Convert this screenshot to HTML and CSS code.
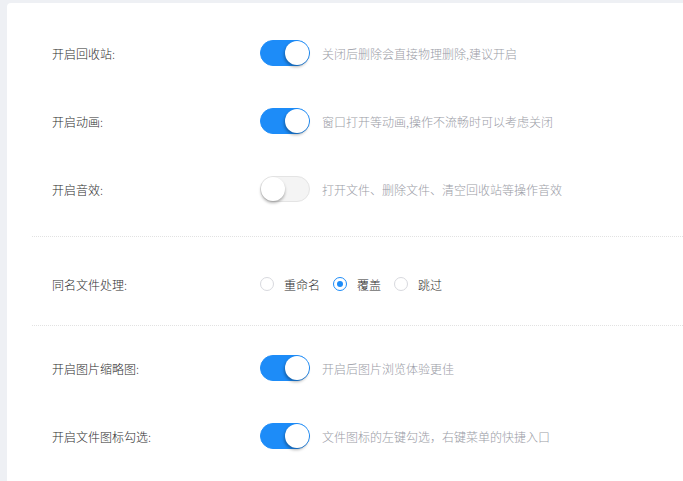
FILE: index.html
```html
<!DOCTYPE html>
<html lang="zh-CN">
<head>
  <meta charset="UTF-8">
  <title>设置</title>
  <link rel="stylesheet" href="styles.css">
</head>
<body>
  <div class="setting-panel">
    <div class="setting-group group-first">
      <div class="setting-row">
        <div class="setting-label">开启回收站:</div>
        <span class="switch on"><span class="switch-knob"></span></span>
        <span class="setting-desc">关闭后删除会直接物理删除,建议开启</span>
      </div>
      <div class="setting-row">
        <div class="setting-label">开启动画:</div>
        <span class="switch on"><span class="switch-knob"></span></span>
        <span class="setting-desc">窗口打开等动画,操作不流畅时可以考虑关闭</span>
      </div>
      <div class="setting-row">
        <div class="setting-label">开启音效:</div>
        <span class="switch"><span class="switch-knob"></span></span>
        <span class="setting-desc">打开文件、删除文件、清空回收站等操作音效</span>
      </div>
    </div>

    <div class="setting-group group-middle">
      <div class="setting-row">
        <div class="setting-label">同名文件处理:</div>
        <div class="radio-list">
          <label class="radio"><span class="radio-dot"></span>重命名</label>
          <label class="radio checked"><span class="radio-dot"></span>覆盖</label>
          <label class="radio"><span class="radio-dot"></span>跳过</label>
        </div>
      </div>
    </div>

    <div class="setting-group group-last">
      <div class="setting-row">
        <div class="setting-label">开启图片缩略图:</div>
        <span class="switch on"><span class="switch-knob"></span></span>
        <span class="setting-desc">开启后图片浏览体验更佳</span>
      </div>
      <div class="setting-row">
        <div class="setting-label">开启文件图标勾选:</div>
        <span class="switch on"><span class="switch-knob"></span></span>
        <span class="setting-desc">文件图标的左键勾选，右键菜单的快捷入口</span>
      </div>
    </div>
  </div>
</body>
</html>
```

FILE: styles.css
```css
* {
  margin: 0;
  padding: 0;
  box-sizing: border-box;
}

body {
  font-family: "Noto Sans CJK SC", "Noto Sans", sans-serif;
  font-size: 12px;
  font-weight: 300;
  color: #2e2e2e;
  background: #eef0f4;
  padding: 3px 0 0 7px;
  height: 100vh;
  overflow: hidden;
}

.setting-panel {
  background: #fff;
  border-radius: 4px 0 0 0;
  padding: 0 0 0 25px;
  min-height: 100%;
}

.setting-group {
  border-bottom: 1px dotted #e2e2e2;
}

.group-first {
  padding: 16px 0 13px;
}

.group-middle {
  padding: 13px 0 7px;
}

.group-last {
  padding: 8px 0 0;
  border-bottom: none;
}

.setting-row {
  display: flex;
  align-items: center;
  height: 68px;
  padding-left: 20px;
}

.setting-label {
  width: 208px;
  flex-shrink: 0;
}

.setting-desc {
  margin-left: 12px;
  color: #9a9ca6;
}

.switch {
  position: relative;
  display: inline-block;
  width: 50px;
  height: 26px;
  border-radius: 13px;
  background: #f4f4f4;
  border: 1px solid #e4e4e4;
  flex-shrink: 0;
}

.switch.on {
  background: #1d8cf8;
  border-color: #1d8cf8;
}

.switch-knob {
  position: absolute;
  top: 0;
  left: 0;
  width: 24px;
  height: 24px;
  border-radius: 50%;
  background: #fff;
  box-shadow: 0 2px 3px rgba(0, 0, 0, 0.3);
}

.switch.on .switch-knob {
  left: 24px;
  box-shadow: -1px 2px 3px rgba(0, 0, 0, 0.3);
}

.radio-list {
  display: flex;
  align-items: center;
  gap: 13px;
}

.radio {
  display: flex;
  align-items: center;
  gap: 10px;
}

.radio-dot {
  position: relative;
  width: 14px;
  height: 14px;
  border-radius: 50%;
  border: 1px solid #d8d9de;
  background: #fff;
}

.radio.checked .radio-dot {
  border-color: #1d8cf8;
}

.radio.checked .radio-dot:after {
  content: "";
  position: absolute;
  top: 3px;
  left: 3px;
  width: 6px;
  height: 6px;
  border-radius: 50%;
  background: #1d8cf8;
}
```
